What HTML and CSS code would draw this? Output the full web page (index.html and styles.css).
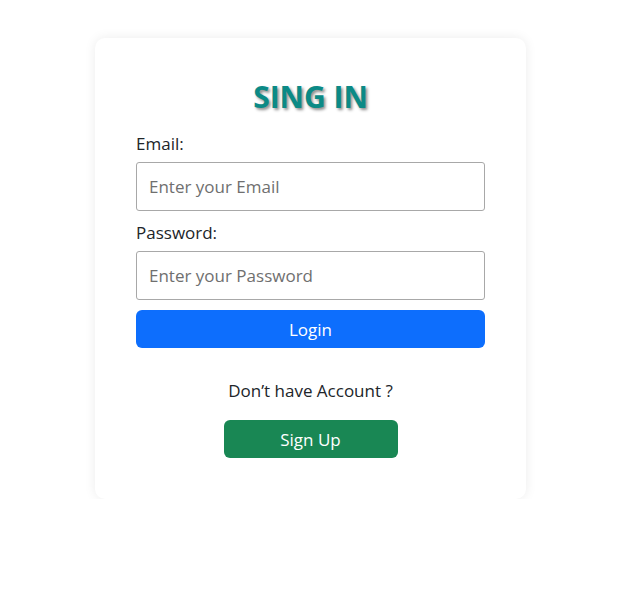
FILE: index.html
```html
<!DOCTYPE html>
<html lang="en">
<head>
    <meta charset="UTF-8">
    <title>Sign In</title>
    <link rel="stylesheet" href="styles.css">
</head>
<body>
<div class="page">
    <form class="card">
        <h1 class="title">SING IN</h1>
        <label class="label" for="email">Email:</label>
        <input class="field" id="email" type="email" placeholder="Enter your Email">
        <label class="label" for="pass">Password:</label>
        <input class="field" id="pass" type="password" placeholder="Enter your Password">
        <button class="btn btn-login" type="button">Login</button>
        <p class="note">Don’t have Account ?</p>
        <button class="btn btn-signup" type="button">Sign Up</button>
    </form>
</div>
</body>
</html>
```

FILE: styles.css
```css
html, body {
    margin: 0;
    padding: 0;
    background: #fff;
}

body {
    font-family: "Open Sans", "Noto Sans", sans-serif;
    color: #212529;
}

.page {
    padding: 38px 0 0 95px;
}

.card {
    width: 349px;
    padding: 44px 41px 41px;
    background: #fff;
    border-radius: 10px;
    box-shadow: 0 0 12px rgba(0, 0, 0, 0.08);
    display: flex;
    flex-direction: column;
}

.title {
    margin: 0 0 19px;
    text-align: center;
    font-size: 30px;
    line-height: 30px;
    font-weight: 700;
    color: #0b8a86;
    text-shadow: 2px 2px 3px rgba(0, 0, 0, 0.45);
}

.label {
    font-size: 17px;
    line-height: 26px;
    margin-bottom: 5px;
}

.field {
    box-sizing: border-box;
    height: 49px;
    margin: 0 0 9px;
    padding: 0 12px;
    border: 1px solid #a8a8a8;
    border-radius: 3px;
    font-family: inherit;
    font-size: 17px;
    color: #212529;
}

.field::placeholder {
    color: #6f6f6f;
}

.btn {
    height: 38px;
    border: none;
    border-radius: 6px;
    color: #fff;
    font-family: inherit;
    font-size: 17px;
}

.btn-login {
    margin-top: 1px;
    background: #0d6efd;
}

.note {
    margin: 30px 0 16px;
    text-align: center;
    font-size: 17px;
    line-height: 26px;
}

.btn-signup {
    align-self: center;
    width: 174px;
    background: #198754;
}
```
